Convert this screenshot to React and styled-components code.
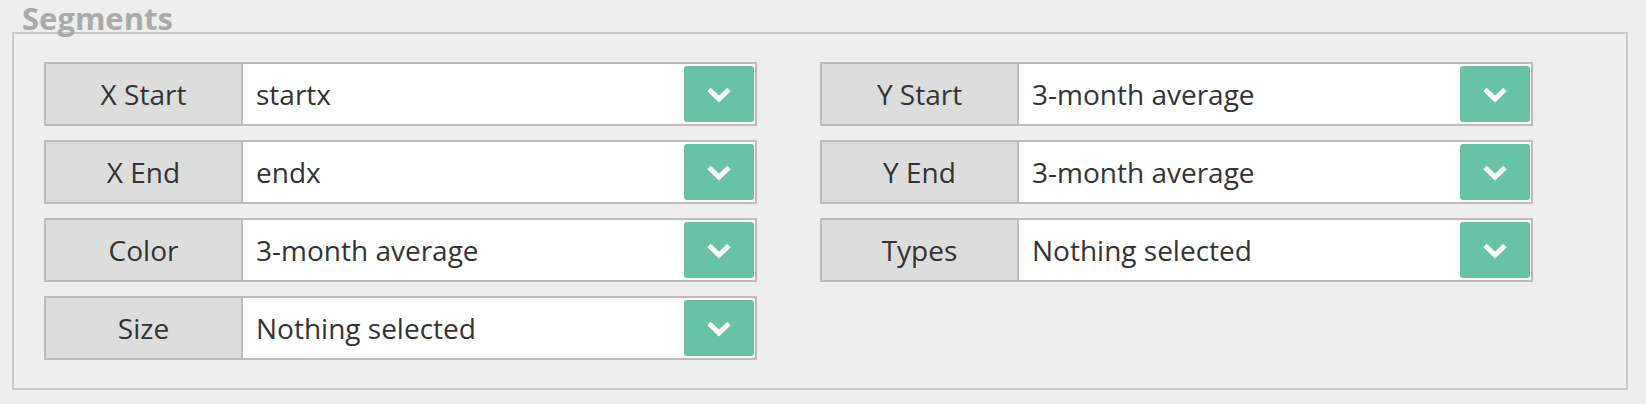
import React from "react";
import styled, { createGlobalStyle } from "styled-components";

const Global = createGlobalStyle`
  html, body {
    margin: 0;
    padding: 0;
    background: #eeeeee;
  }
  body {
    font-family: "Open Sans", "Noto Sans", sans-serif;
    color: #333333;
  }
`;

const Page = styled.div`
  padding: 0 18px 16px 12px;
`;

const Title = styled.div`
  position: relative;
  z-index: 1;
  margin: 0 0 -5px 10px;
  font-size: 31px;
  font-weight: 700;
  line-height: 37px;
  color: #aaaaaa;
`;

const Panel = styled.div`
  border: 2px solid #c9c9c9;
  padding: 28px 30px 28px 30px;
`;

const Grid = styled.div`
  display: grid;
  grid-template-columns: 713px 713px;
  column-gap: 63px;
  row-gap: 14px;
`;

const Row = styled.div`
  display: flex;
  height: 64px;
  box-sizing: border-box;
`;

const Label = styled.div`
  width: 199px;
  box-sizing: border-box;
  border: 2px solid #bcbcbc;
  background: #dddddd;
  display: flex;
  align-items: center;
  justify-content: center;
  font-size: 28px;
  color: #333333;
`;

const Select = styled.div`
  flex: 1;
  display: flex;
  align-items: center;
  box-sizing: border-box;
  border: 2px solid #bcbcbc;
  border-left: none;
  background: #ffffff;
  padding: 2px 1px 2px 13px;
`;

const Value = styled.span`
  flex: 1;
  font-size: 28px;
  color: #333333;
  white-space: nowrap;
`;

const Toggle = styled.div`
  width: 70px;
  height: 56px;
  border-radius: 3px;
  background: #68c3a6;
  display: flex;
  align-items: center;
  justify-content: center;
`;

const Chevron = () => (
  <svg width="26" height="17" viewBox="0 0 26 17">
    <polyline
      points="3,3.5 13,13 23,3.5"
      fill="none"
      stroke="#ffffff"
      strokeWidth="5"
      strokeLinejoin="miter"
      strokeLinecap="butt"
    />
  </svg>
);

const fields = [
  ["X Start", "startx"],
  ["Y Start", "3-month average"],
  ["X End", "endx"],
  ["Y End", "3-month average"],
  ["Color", "3-month average"],
  ["Types", "Nothing selected"],
  ["Size", "Nothing selected"],
];

export default function App() {
  return (
    <Page>
      <Global />
      <Title>Segments</Title>
      <Panel>
        <Grid>
          {fields.map(([label, value]) => (
            <Row key={label}>
              <Label>{label}</Label>
              <Select>
                <Value>{value}</Value>
                <Toggle>
                  <Chevron />
                </Toggle>
              </Select>
            </Row>
          ))}
        </Grid>
      </Panel>
    </Page>
  );
}
